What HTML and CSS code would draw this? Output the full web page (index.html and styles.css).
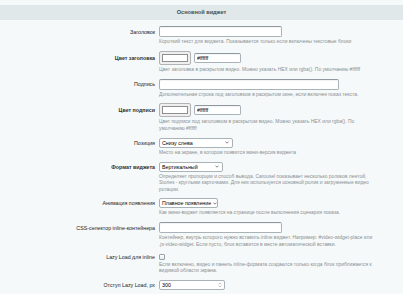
FILE: index.html
```html
<!DOCTYPE html>
<html lang="ru">
<head>
  <meta charset="UTF-8">
  <meta name="viewport" content="width=device-width, initial-scale=1.0">
  <title>Основной виджет</title>
  <link rel="stylesheet" href="styles.css">
</head>
<body>
  <div class="page">
    <div class="heading">Основной виджет</div>

    <div class="row">
      <label class="label" for="title">Заголовок</label>
      <input class="input w-title" type="text" id="title">
      <div class="hint">Короткий текст для виджета. Показывается только если включены текстовые блоки</div>
    </div>

    <div class="row">
      <label class="label bold">Цвет заголовка</label>
      <div class="color-field">
        <div class="swatch"><div class="swatch-color"></div></div>
        <input class="input w-hex" type="text" value="#ffffff">
      </div>
      <div class="hint">Цвет заголовка в раскрытом видео. Можно указать HEX или rgba(). По умолчанию #ffffff</div>
    </div>

    <div class="row">
      <label class="label" for="subtitle">Подпись</label>
      <input class="input w-sub" type="text" id="subtitle">
      <div class="hint">Дополнительная строка под заголовком в раскрытом окне, если включен показ текста.</div>
    </div>

    <div class="row">
      <label class="label bold">Цвет подписи</label>
      <div class="color-field">
        <div class="swatch"><div class="swatch-color"></div></div>
        <input class="input w-hex" type="text" value="#ffffff">
      </div>
      <div class="hint">Цвет подписи под заголовком в раскрытом видео. Можно указать HEX или rgba(). По<br>умолчанию #ffffff</div>
    </div>

    <div class="row">
      <label class="label">Позиция</label>
      <div class="select w-pos">
        <span>Снизу слева</span>
        <svg class="chevron" width="4" height="3" viewBox="0 0 4 3"><polyline points="0.5,0.6 2,2.2 3.5,0.6" fill="none" stroke="#555" stroke-width="0.7"/></svg>
      </div>
      <div class="hint">Место на экране, в котором появится мини-версия виджета</div>
    </div>

    <div class="row">
      <label class="label bold">Формат виджета</label>
      <div class="select w-format">
        <span>Вертикальный</span>
        <svg class="chevron" width="4" height="3" viewBox="0 0 4 3"><polyline points="0.5,0.6 2,2.2 3.5,0.6" fill="none" stroke="#555" stroke-width="0.7"/></svg>
      </div>
      <div class="hint">Определяет пропорции и способ вывода. Carousel показывает несколько роликов лентой,<br>Stories - круглыми карточками. Для них используется основной ролик и загруженные видео<br>ротации.</div>
    </div>

    <div class="row">
      <label class="label">Анимация появления</label>
      <div class="select w-anim">
        <span>Плавное появление</span>
        <svg class="chevron" width="4" height="3" viewBox="0 0 4 3"><polyline points="0.5,0.6 2,2.2 3.5,0.6" fill="none" stroke="#555" stroke-width="0.7"/></svg>
      </div>
      <div class="hint">Как мини-виджет появляется на странице после выполнения сценария показа.</div>
    </div>

    <div class="row">
      <label class="label" for="selector">CSS-селектор inline-контейнера</label>
      <input class="input w-title" type="text" id="selector">
      <div class="hint">Контейнер, внутрь которого нужно вставить inline виджет. Например: #video-widget-place или<br>.js-video-widget. Если пусто, блок вставится в месте автоматической вставки.</div>
    </div>

    <div class="row">
      <label class="label" for="lazy">Lazy Load для inline</label>
      <div><input class="checkbox" type="checkbox" id="lazy"></div>
      <div class="hint">Если включено, видео и панель inline-формата создаются только когда блок приближается к<br>видимой области экрана.</div>
    </div>

    <div class="row">
      <label class="label" for="offset">Отступ Lazy Load, px</label>
      <div class="number w-num">
        <input type="text" id="offset" value="300">
        <svg class="spin" width="4" height="6" viewBox="0 0 4 6"><polyline points="0.8,2.3 2,1.1 3.2,2.3" fill="none" stroke="#888" stroke-width="0.6"/><polyline points="0.8,3.7 2,4.9 3.2,3.7" fill="none" stroke="#888" stroke-width="0.6"/></svg>
      </div>
    </div>
  </div>
</body>
</html>
```

FILE: styles.css
```css
body {
  margin: 0;
  background-color: #f5f9f9;
  font-family: "Liberation Sans", Arial, sans-serif;
  color: #000;
}
.page {
  padding-top: 5px;
}
.heading {
  background-color: #e0e8ea;
  height: 15px;
  line-height: 15px;
  text-align: center;
  font-size: 5.6px;
  font-weight: bold;
  color: #3f5257;
  margin-bottom: 6px;
}
.row {
  display: grid;
  grid-template-columns: 155px 1fr;
  column-gap: 4px;
  row-gap: 2px;
  align-items: center;
  justify-items: start;
  margin-bottom: 5.2px;
}
.label {
  justify-self: end;
  font-size: 5.3px;
  color: #1e2326;
  white-space: nowrap;
}
.label.bold {
  font-weight: bold;
  color: #2b3134;
}
.hint {
  grid-column: 2;
  font-size: 4.95px;
  line-height: 6.6px;
  color: #8b9094;
  white-space: nowrap;
}
.input {
  height: 11px;
  box-sizing: border-box;
  border: 1px solid #a9b2b6;
  border-top-color: #8e989e;
  border-radius: 2px;
  background: #fff;
  font-family: "Liberation Sans", Arial, sans-serif;
  font-size: 5.3px;
  color: #000;
  padding: 0 2px;
  margin: 0;
  box-shadow: inset 0 1px 1px rgba(0,0,0,0.05);
}
.w-title { width: 123px; }
.w-sub { width: 180px; }
.w-hex { width: 47px; height: 10px; }
.color-field {
  display: flex;
  align-items: center;
  gap: 3px;
}
.swatch {
  width: 32px;
  height: 14px;
  box-sizing: border-box;
  border: 1px solid #b3b3b3;
  border-radius: 2px;
  background: #efefef;
  padding: 2px;
}
.swatch-color {
  height: 100%;
  box-sizing: border-box;
  border: 1px solid #8f8f8f;
  background: #fff;
}
.select {
  display: flex;
  align-items: center;
  justify-content: space-between;
  gap: 2px;
  height: 10px;
  box-sizing: border-box;
  border: 1px solid #a9b2b6;
  border-radius: 2px;
  background: #fff;
  padding: 0 3px 0 2px;
  font-size: 5.3px;
  white-space: nowrap;
}
.select svg {
  flex-shrink: 0;
}
.w-pos { width: 74px; }
.w-format { width: 64px; }
.w-anim { width: 59px; }
.checkbox {
  appearance: none;
  display: block;
  width: 6px;
  height: 6px;
  margin: 0;
  box-sizing: border-box;
  border: 1px solid #9aa3a8;
  border-radius: 1px;
  background: linear-gradient(#fff, #e6e9ea);
}
.number {
  display: flex;
  align-items: center;
  height: 10px;
  box-sizing: border-box;
  border: 1px solid #a9b2b6;
  border-radius: 2px;
  background: #fff;
  padding: 0 2px;
}
.number input {
  flex: 1;
  min-width: 0;
  border: none;
  padding: 0;
  margin: 0;
  background: none;
  font-family: "Liberation Sans", Arial, sans-serif;
  font-size: 5.3px;
}
.w-num { width: 66px; }
.spin {
  display: block;
}
```
